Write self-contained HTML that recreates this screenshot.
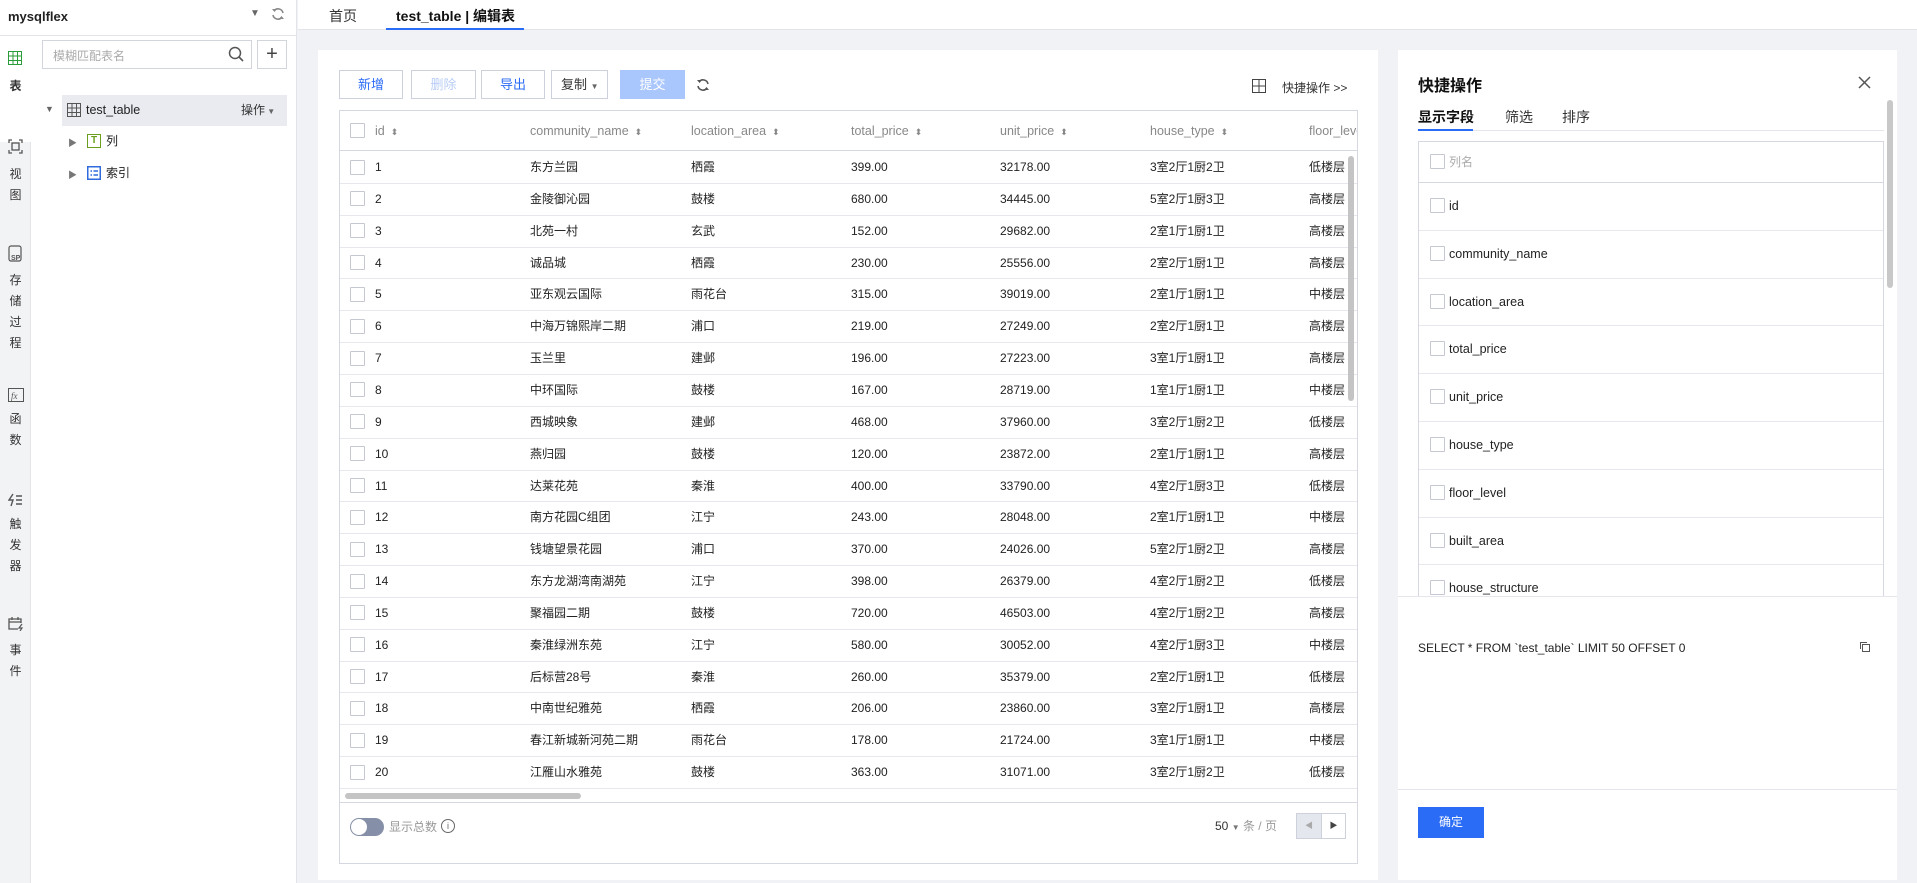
<!DOCTYPE html>
<html><head><meta charset="utf-8"><style>
*{box-sizing:border-box;margin:0;padding:0}
body{width:1917px;height:883px;overflow:hidden;background:#f0f2f5;font-family:"Liberation Sans","Noto Sans CJK SC",sans-serif;font-size:12px;color:#222;position:relative}
.a{position:absolute}
.c{position:absolute;white-space:nowrap;height:32px;line-height:32px}
.cb{position:absolute;width:15px;height:15px;border:1px solid #c5c8d0;background:#fff;border-radius:1px}
.btn{position:absolute;top:70px;height:29px;border:1px solid #ccd1dc;background:#fff;font-size:13px;text-align:center;line-height:27px}
.rowl{position:absolute;left:0;right:0;border-top:1px solid #e6e8ee}
.sort{display:inline-block;margin-left:6px;color:#888;font-size:9px}
.rail{position:absolute;left:0;width:31px;text-align:center;font-size:12px;color:#333;line-height:21px}
</style></head><body>
<div class="a" style="left:0;top:0;width:297px;height:883px;background:#fff;border-right:1px solid #e2e4ea"></div>
<div class="a" style="left:0;top:0;width:297px;height:36px;border-bottom:1px solid #e2e4ea"></div>
<div class="a" style="left:8px;top:9px;font-size:13px;font-weight:bold;color:#222">mysqlflex</div>
<div class="a" style="left:250px;top:8px;font-size:10px;color:#666">▼</div>
<svg class="a" style="left:271px;top:6px" width="14" height="16" viewBox="0 0 14 16"><path d="M3 5 A5 5 0 0 1 12 7 M11 11 A5 5 0 0 1 2 9" fill="none" stroke="#888" stroke-width="1.6"/><path d="M1 3 L3.5 6 L6 3" fill="#888"/><path d="M8 13 L10.5 10 L13 13" fill="#888"/></svg>
<div class="a" style="left:0;top:36px;width:31px;height:847px;background:#f2f3f5;border-right:1px solid #e2e4ea"></div>
<div class="a" style="left:0;top:36px;width:31px;height:106px;background:#fff"></div>
<svg class="a" style="left:8px;top:51px" width="14" height="14"><rect x="0.5" y="0.5" width="13" height="13" fill="none" stroke="#2a9d3a"/><path d="M0 5H14M0 9.5H14M5 0V14M9.5 0V14" stroke="#2a9d3a"/></svg>
<div class="rail" style="top:76px;font-weight:bold">表</div>
<svg class="a" style="left:8px;top:139px" width="15" height="15"><path d="M1 4V1H4M11 1H14V4M14 11V14H11M4 14H1V11" fill="none" stroke="#555" stroke-width="1.3"/><rect x="4" y="4" width="7" height="7" fill="none" stroke="#555" stroke-width="1.3"/></svg>
<div class="rail" style="top:164px">视<br>图</div>
<svg class="a" style="left:8px;top:245px" width="15" height="17"><rect x="1" y="1" width="12" height="15" rx="2" fill="none" stroke="#555" stroke-width="1.2"/><text x="3" y="15" font-size="7" font-weight="bold" fill="#555" font-family="Liberation Sans">SP</text></svg>
<div class="rail" style="top:270px">存<br>储<br>过<br>程</div>
<svg class="a" style="left:8px;top:388px" width="16" height="14"><rect x="0.5" y="0.5" width="15" height="13" fill="none" stroke="#555"/><text x="3" y="11" font-size="9" font-style="italic" fill="#555" font-family="Liberation Serif">fx</text></svg>
<div class="rail" style="top:409px">函<br>数</div>
<svg class="a" style="left:8px;top:493px" width="15" height="14"><path d="M5 1L1 7H5L3 13" fill="none" stroke="#555" stroke-width="1.4"/><path d="M8 3H14M8 7H14M8 11H14" stroke="#555" stroke-width="1.4"/></svg>
<div class="rail" style="top:514px">触<br>发<br>器</div>
<svg class="a" style="left:8px;top:616px" width="16" height="15"><path d="M10 13H1V3H13V7M1 6H13M4 1V4M10 1V4" fill="none" stroke="#555" stroke-width="1.3"/><path d="M14 8L11 12H14L12 15" fill="none" stroke="#555" stroke-width="1.2"/></svg>
<div class="rail" style="top:640px">事<br>件</div>
<div class="a" style="left:42px;top:40px;width:210px;height:29px;border:1px solid #d2d5dc;background:#fff"></div>
<div class="a" style="left:53px;top:47px;color:#aaa;font-size:12px">模糊匹配表名</div>
<svg class="a" style="left:228px;top:46px" width="16" height="16"><circle cx="7" cy="7" r="5.5" fill="none" stroke="#555" stroke-width="1.5"/><path d="M11 11L15 15" stroke="#555" stroke-width="1.6"/></svg>
<div class="a" style="left:257px;top:40px;width:30px;height:29px;border:1px solid #d2d5dc;background:#fff;text-align:center;font-size:20px;line-height:26px;color:#444">+</div>
<div class="a" style="left:62px;top:95px;width:225px;height:31px;background:#e9ebf0"></div>
<div class="a" style="left:45px;top:104px;font-size:9px;color:#666">▼</div>
<svg class="a" style="left:67px;top:103px" width="14" height="14"><rect x="0.5" y="0.5" width="13" height="13" fill="none" stroke="#555"/><path d="M0 5H14M0 9.5H14M5 0V14M9.5 0V14" stroke="#555"/></svg>
<div class="c" style="left:86px;top:95px;font-size:12.5px;color:#222;height:31px;line-height:31px">test_table</div>
<div class="c" style="left:241px;top:95px;font-size:12px;color:#333;height:31px;line-height:31px">操作<span style="font-size:8px;color:#666"> ▼</span></div>
<div class="a" style="left:68px;top:136px;font-size:9px;color:#777">▶</div>
<div class="a" style="left:87px;top:134px;width:14px;height:14px;border:1.5px solid #6a9f1e;color:#6a9f1e;font-size:10px;font-weight:bold;text-align:center;line-height:11px">T</div>
<div class="c" style="left:106px;top:125px;font-size:12px">列</div>
<div class="a" style="left:68px;top:168px;font-size:9px;color:#777">▶</div>
<svg class="a" style="left:87px;top:166px" width="14" height="14"><rect x="0.75" y="0.75" width="12.5" height="12.5" fill="none" stroke="#2f6bdc" stroke-width="1.5"/><path d="M3.5 5H5M3.5 9H5M6.5 5H11M6.5 9H11" stroke="#2f6bdc" stroke-width="1.5"/></svg>
<div class="c" style="left:106px;top:157px;font-size:12px">索引</div>

<div class="a" style="left:298px;top:0;width:1619px;height:30px;background:#fff;border-bottom:1px solid #e2e4ea"></div>
<div class="a" style="left:329px;top:6px;font-size:14px;color:#333">首页</div>
<div class="a" style="left:396px;top:6px;font-size:14px;font-weight:bold;color:#111">test_table | 编辑表</div>
<div class="a" style="left:386px;top:28px;width:138px;height:2px;background:#2b6cf6"></div>

<div class="a" style="left:318px;top:50px;width:1060px;height:830px;background:#fff"></div>
<div class="btn" style="left:339px;width:64px;color:#2b6cf6">新增</div>
<div class="btn" style="left:411px;width:65px;color:#b9cdf7">删除</div>
<div class="btn" style="left:481px;width:64px;color:#2b6cf6">导出</div>
<div class="btn" style="left:551px;width:57px;color:#333;text-align:left;padding-left:9px">复制 <span style="font-size:8px;color:#666">▼</span></div>
<div class="btn" style="left:620px;width:65px;background:#a9c6fd;border-color:#a9c6fd;color:#fff">提交</div>
<svg class="a" style="left:696px;top:77px" width="14" height="16" viewBox="0 0 14 16"><path d="M3 5 A5 5 0 0 1 12 7 M11 11 A5 5 0 0 1 2 9" fill="none" stroke="#555" stroke-width="1.6"/><path d="M1 3 L3.5 6 L6 3" fill="#555"/><path d="M8 13 L10.5 10 L13 13" fill="#555"/></svg>
<svg class="a" style="left:1252px;top:79px" width="14" height="14"><rect x="0.5" y="0.5" width="13" height="13" fill="none" stroke="#444"/><path d="M0 7H14M7 0V14" stroke="#444"/></svg>
<div class="a" style="left:1282px;top:79px;font-size:12px;color:#333">快捷操作 &gt;&gt;</div>

<div class="a" style="left:339px;top:110px;width:1019px;height:693px;border:1px solid #d5d8e0;overflow:hidden">
<div class="a" style="left:0;top:0;width:1017px;height:40px;background:#fff;border-bottom:1px solid #d5d8e0"></div>
<div class="cb" style="left:10px;top:12px"></div>
<div class="c" style="top:4px;left:35px;color:#888;font-size:12.5px">id<span class="sort">⬍</span></div>
<div class="c" style="top:4px;left:190px;color:#888;font-size:12.5px">community_name<span class="sort">⬍</span></div>
<div class="c" style="top:4px;left:351px;color:#888;font-size:12.5px">location_area<span class="sort">⬍</span></div>
<div class="c" style="top:4px;left:511px;color:#888;font-size:12.5px">total_price<span class="sort">⬍</span></div>
<div class="c" style="top:4px;left:660px;color:#888;font-size:12.5px">unit_price<span class="sort">⬍</span></div>
<div class="c" style="top:4px;left:810px;color:#888;font-size:12.5px">house_type<span class="sort">⬍</span></div>
<div class="c" style="top:4px;left:969px;color:#888;font-size:12.5px">floor_level</div>
<div id="rows"></div>
<div class="a" style="left:1008px;top:45px;width:6px;height:245px;background:#c4c4c4;border-radius:3px"></div>
<div class="a" style="left:5px;top:682px;width:236px;height:6px;background:#c4c4c4;border-radius:3px"></div>
</div>
<div class="a" style="left:339px;top:802px;width:1019px;height:62px;border:1px solid #d5d8e0;border-top:none"></div>
<div class="a" style="left:350px;top:818px;width:34px;height:18px;border-radius:9px;background:#8590a8"></div>
<div class="a" style="left:351px;top:819px;width:16px;height:16px;border-radius:8px;background:#fff"></div>
<div class="c" style="left:389px;top:811px;font-size:12px;color:#999">显示总数</div>
<div class="a" style="left:441px;top:819px;width:14px;height:14px;border:1.3px solid #666;border-radius:7px;font-size:9px;text-align:center;line-height:12px;color:#666">i</div>
<div class="c" style="left:1215px;top:810px;font-size:12px;color:#333">50 <span style="font-size:8px;color:#777">▼</span> <span style="color:#999">条 / 页</span></div>
<div class="a" style="left:1296px;top:813px;width:26px;height:26px;background:#e4e7ee;border:1px solid #ccd1dc;font-size:8px;color:#aaa;text-align:center;line-height:24px">◀</div>
<div class="a" style="left:1321px;top:813px;width:25px;height:26px;background:#fff;border:1px solid #ccd1dc;font-size:8px;color:#444;text-align:center;line-height:24px">▶</div>

<div class="a" style="left:1398px;top:50px;width:499px;height:830px;background:#fff"></div>
<div class="a" style="left:1418px;top:72px;font-size:16px;font-weight:bold;color:#111">快捷操作</div>
<svg class="a" style="left:1858px;top:76px" width="13" height="13"><path d="M1 1L12 12M12 1L1 12" stroke="#555" stroke-width="1.5"/></svg>
<div class="a" style="left:1418px;top:107px;font-size:14px;font-weight:bold;color:#111">显示字段</div>
<div class="a" style="left:1505px;top:107px;font-size:14px;color:#333">筛选</div>
<div class="a" style="left:1562px;top:107px;font-size:14px;color:#333">排序</div>
<div class="a" style="left:1418px;top:130px;width:466px;height:1px;background:#e4e6ec"></div>
<div class="a" style="left:1418px;top:129px;width:55px;height:2px;background:#2b6cf6"></div>
<div class="a" style="left:1887px;top:100px;width:6px;height:188px;background:#c8c8c8;border-radius:3px"></div>
<div class="a" style="left:1418px;top:141px;width:466px;height:456px;border:1px solid #d5d8e0;border-bottom:none;overflow:hidden" id="fl"></div>
<div class="a" style="left:1398px;top:596px;width:499px;height:1px;background:#e4e6ec"></div>
<div class="c" style="left:1418px;top:632px;font-size:12px;color:#222">SELECT * FROM `test_table` LIMIT 50 OFFSET 0</div>
<svg class="a" style="left:1859px;top:641px" width="12" height="12"><rect x="3.5" y="3.5" width="7" height="7" fill="none" stroke="#555"/><path d="M1.5 8V1.5H8" fill="none" stroke="#555"/></svg>
<div class="a" style="left:1398px;top:789px;width:499px;height:1px;background:#e4e6ec"></div>
<div class="a" style="left:1418px;top:807px;width:66px;height:31px;background:#2b6cf6;color:#fff;font-size:12px;text-align:center;line-height:31px">确定</div>

<script>
var d=[["1","东方兰园","栖霞","399.00","32178.00","3室2厅1厨2卫","低楼层"],["2","金陵御沁园","鼓楼","680.00","34445.00","5室2厅1厨3卫","高楼层"],["3","北苑一村","玄武","152.00","29682.00","2室1厅1厨1卫","高楼层"],["4","诚品城","栖霞","230.00","25556.00","2室2厅1厨1卫","高楼层"],["5","亚东观云国际","雨花台","315.00","39019.00","2室1厅1厨1卫","中楼层"],["6","中海万锦熙岸二期","浦口","219.00","27249.00","2室2厅1厨1卫","高楼层"],["7","玉兰里","建邺","196.00","27223.00","3室1厅1厨1卫","高楼层"],["8","中环国际","鼓楼","167.00","28719.00","1室1厅1厨1卫","中楼层"],["9","西城映象","建邺","468.00","37960.00","3室2厅1厨2卫","低楼层"],["10","燕归园","鼓楼","120.00","23872.00","2室1厅1厨1卫","高楼层"],["11","达莱花苑","秦淮","400.00","33790.00","4室2厅1厨3卫","低楼层"],["12","南方花园C组团","江宁","243.00","28048.00","2室1厅1厨1卫","中楼层"],["13","钱塘望景花园","浦口","370.00","24026.00","5室2厅1厨2卫","高楼层"],["14","东方龙湖湾南湖苑","江宁","398.00","26379.00","4室2厅1厨2卫","低楼层"],["15","聚福园二期","鼓楼","720.00","46503.00","4室2厅1厨2卫","高楼层"],["16","秦淮绿洲东苑","江宁","580.00","30052.00","4室2厅1厨3卫","中楼层"],["17","后标营28号","秦淮","260.00","35379.00","2室2厅1厨1卫","低楼层"],["18","中南世纪雅苑","栖霞","206.00","23860.00","3室2厅1厨1卫","高楼层"],["19","春江新城新河苑二期","雨花台","178.00","21724.00","3室1厅1厨1卫","中楼层"],["20","江雁山水雅苑","鼓楼","363.00","31071.00","3室2厅1厨2卫","低楼层"]];
var xs=[35,190,351,511,660,810,969],h="";
d.forEach(function(r,i){var t=40+i*31.85;h+='<div class="rowl" style="top:'+(t+31.85)+'px"></div><div class="cb" style="left:10px;top:'+(t+8.5)+'px"></div>';r.forEach(function(c,j){h+='<div class="c" style="left:'+xs[j]+'px;top:'+t+'px">'+c+'</div>'})});
document.getElementById('rows').innerHTML=h;
var f=["id","community_name","location_area","total_price","unit_price","house_type","floor_level","built_area","house_structure"],g='<div class="cb" style="left:11px;top:12px"></div><div class="c" style="left:30px;top:4px;color:#aaa;font-size:12px">列名</div><div class="rowl" style="top:40px;border-color:#d5d8e0"></div>';
f.forEach(function(n,i){var t=40+i*47.8;g+='<div class="cb" style="left:11px;top:'+(t+16)+'px"></div><div class="c" style="left:30px;top:'+(t+8)+'px;font-size:12.5px;color:#222">'+n+'</div><div class="rowl" style="top:'+(t+47.8)+'px"></div>'});
document.getElementById('fl').innerHTML=g;
</script>
</body></html>
